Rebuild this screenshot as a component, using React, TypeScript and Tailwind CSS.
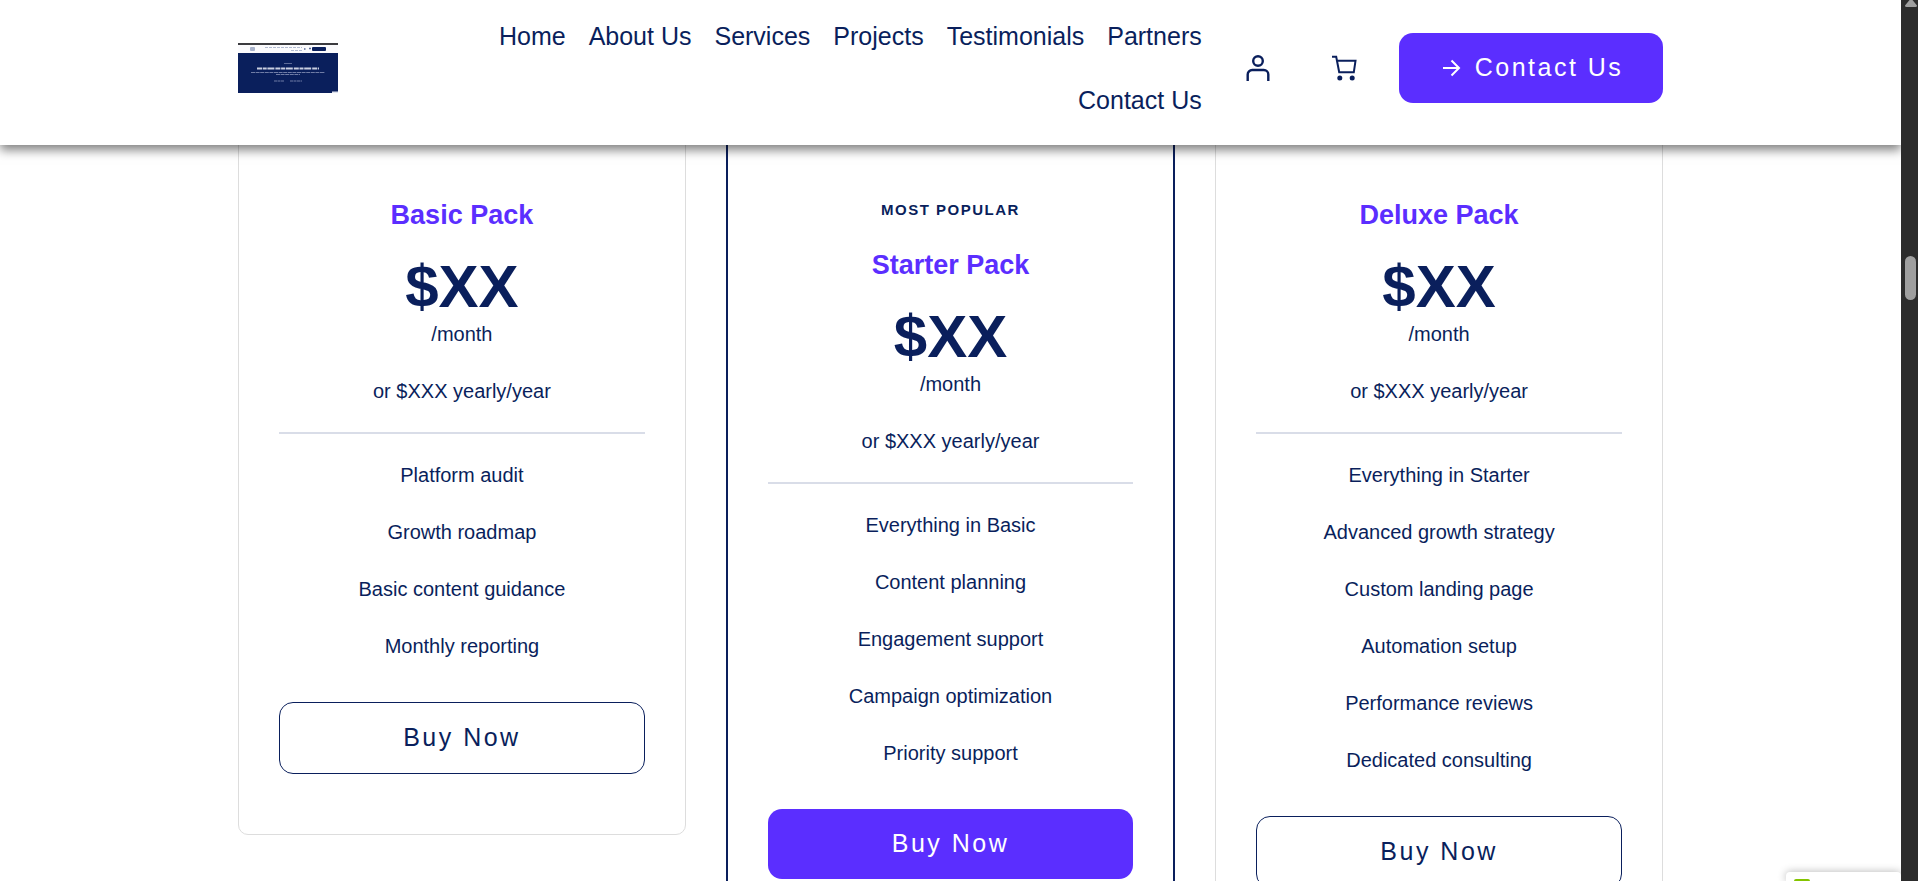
import React from "react";

type Plan = {
  name: string;
  badge?: string;
  features: string[];
};

const NAV_LINKS = ["Home", "About Us", "Services", "Projects", "Testimonials", "Partners", "Contact Us"];

const PLANS: Plan[] = [
  {
    name: "Basic Pack",
    features: ["Platform audit", "Growth roadmap", "Basic content guidance", "Monthly reporting"],
  },
  {
    name: "Starter Pack",
    badge: "Most popular",
    features: [
      "Everything in Basic",
      "Content planning",
      "Engagement support",
      "Campaign optimization",
      "Priority support",
    ],
  },
  {
    name: "Deluxe Pack",
    features: [
      "Everything in Starter",
      "Advanced growth strategy",
      "Custom landing page",
      "Automation setup",
      "Performance reviews",
      "Dedicated consulting",
    ],
  },
];

function Logo() {
  return (
    <svg width="100" height="50" viewBox="0 0 100 50" role="img" aria-label="Logo">
      <rect width="100" height="50" fill="#0a1f5c" />
      <rect width="100" height="10" fill="#fbfbfd" />
      <rect width="100" height="2" fill="#3b3b3f" />
      <rect x="12" y="4" width="5" height="4" rx="1" fill="#a9b3cb" />
      <path d="M27 4.5h37M53 7.5h11" stroke="#b3bcd2" strokeWidth="1" strokeDasharray="3 1" />
      <path d="M66 6h1.5M71 5.5h2" stroke="#5c6b98" strokeWidth="1.5" />
      <rect x="74" y="4" width="14" height="4" rx="1" fill="#0a1f5c" />
      <path d="M46 20.5h8" stroke="#5c6b98" strokeWidth="1" />
      <path d="M19 25.5h62" stroke="#c9cfe0" strokeWidth="2" strokeDasharray="5 0.7 4 0.7 7 1" />
      <path d="M13 29.5h74M38 31.5h24" stroke="#6f7ca6" strokeWidth="1" strokeDasharray="4 0.6" />
      <path d="M36 38h10M52 38h12" stroke="#6f7ca6" strokeWidth="1" strokeDasharray="3 0.5" />
      <rect x="94" y="48.5" width="6" height="1.5" fill="#dfe3ee" />
    </svg>
  );
}

function UserIcon() {
  return (
    <svg width="26" height="26" viewBox="0 0 26 26" fill="none" stroke="#0a1f5c" strokeWidth="2.4" aria-hidden="true">
      <circle cx="13" cy="6" r="4.8" />
      <path d="M2.700 26v-6.500a4.500 4.500 0 0 1 4.500-4.500h11.600a4.500 4.500 0 0 1 4.500 4.500v6.500" />
    </svg>
  );
}

function CartIcon() {
  return (
    <svg width="26" height="26" viewBox="0 0 26 26" fill="none" stroke="#0a1f5c" strokeWidth="2" aria-hidden="true">
      <path d="M1 1.700h4.200l3 15.600h14.600l1.700-11.500H6" />
      <circle cx="8.8" cy="22.9" r="2.5" fill="#0a1f5c" stroke="none" />
      <circle cx="21.2" cy="22.9" r="2.5" fill="#0a1f5c" stroke="none" />
    </svg>
  );
}

function ArrowIcon() {
  return (
    <svg width="24" height="24" viewBox="0 0 24 24" fill="none" stroke="currentColor" strokeWidth="2" aria-hidden="true">
      <path d="M4 12h15.500M12.500 4.500l7.500 7.500-7.500 7.500" />
    </svg>
  );
}

function Header() {
  return (
    <header className="relative z-10 bg-white shadow-[0_5px_10px_rgba(0,0,0,0.5)]">
      <div className="mx-auto flex h-[145px] w-3/4 items-center pb-[10px]">
        <a href="#home" className="shrink-0">
          <Logo />
        </a>
        <nav className="ml-auto w-[720px]">
          <ul className="flex flex-wrap justify-end gap-x-[23px] text-[25px] leading-[64px]">
            {NAV_LINKS.map((label) => (
              <li key={label}>
                <a href="#top">{label}</a>
              </li>
            ))}
          </ul>
        </nav>
        <a href="#account" aria-label="Account" className="ml-[43px] shrink-0">
          <UserIcon />
        </a>
        <a href="#cart" aria-label="Cart" className="ml-[60px] shrink-0">
          <CartIcon />
        </a>
        <a
          href="#contact"
          className="ml-[42px] flex h-[70px] shrink-0 items-center gap-3 rounded-[14px] bg-[#5b2eff] px-10 text-[25px] tracking-widest text-white"
        >
          <ArrowIcon />
          Contact Us
        </a>
      </div>
    </header>
  );
}

function PlanCard({ plan }: { plan: Plan }) {
  const featured = Boolean(plan.badge);
  return (
    <article
      className={
        featured
          ? "rounded-[10px] border-2 border-[#0a1f5c] px-10 pt-[74px] pb-[60px] text-center"
          : "rounded-[10px] border border-[#dddddd] px-10 pt-[75px] pb-[60px] text-center"
      }
    >
      {plan.badge && (
        <p className="mb-5 text-[15px] leading-[30px] font-bold tracking-widest uppercase">{plan.badge}</p>
      )}
      <h3 className="text-[27px] leading-[40px] font-bold text-[#5b2eff]">{plan.name}</h3>
      <p className="mt-[23px] text-[60px] leading-[58px] font-bold">$XX</p>
      <p className="text-xl leading-[37px]">/month</p>
      <p className="mt-5 text-xl leading-[37px]">or $XXX yearly/year</p>
      <hr className="mt-[22px] mb-[23px] border-t-2 border-[#d9dde8]" />
      <ul className="mb-[37px] flex flex-col gap-5 text-xl leading-[37px]">
        {plan.features.map((feature) => (
          <li key={feature}>{feature}</li>
        ))}
      </ul>
      <button
        type="button"
        className={
          featured
            ? "h-[70px] w-full rounded-[14px] bg-[#5b2eff] text-[25px] tracking-widest text-white"
            : "h-[72px] w-full rounded-[14px] border border-[#0a1f5c] text-[25px] tracking-widest"
        }
      >
        Buy Now
      </button>
    </article>
  );
}

function ScrollTrack() {
  return (
    <div className="flex w-[17px] shrink-0 flex-col items-center bg-[#2c2c2c] pl-[2px]" aria-hidden="true">
      <svg width="12" height="7" viewBox="0 0 12 7">
        <path d="M4.500 0h3L12 5.500Q12 7 10.500 7h-9Q0 7 0 5.500z" fill="#9f9f9f" />
      </svg>
      <div className="mt-[249px] h-11 w-[11px] rounded-full bg-[#9f9f9f]" />
    </div>
  );
}

export default function App() {
  return (
    <div className="flex h-screen overflow-hidden bg-white font-['Liberation_Sans',Arial,sans-serif] text-[#0a1f5c]">
      <div className="relative min-w-0 flex-1 overflow-hidden">
        <Header />
        <main className="mx-auto -mt-[26px] grid w-3/4 grid-cols-3 items-start gap-10">
          {PLANS.map((plan) => (
            <PlanCard key={plan.name} plan={plan} />
          ))}
        </main>
        <div className="absolute right-0 bottom-0 z-20 h-[9px] w-[115px] rounded-t-[4px] bg-white px-2 pt-[7px] shadow-[0_0_8px_rgba(0,0,0,0.3)]">
          <div className="h-[2px] w-4 rounded-t-[2px] bg-[#84c400]" />
        </div>
      </div>
      <ScrollTrack />
    </div>
  );
}
